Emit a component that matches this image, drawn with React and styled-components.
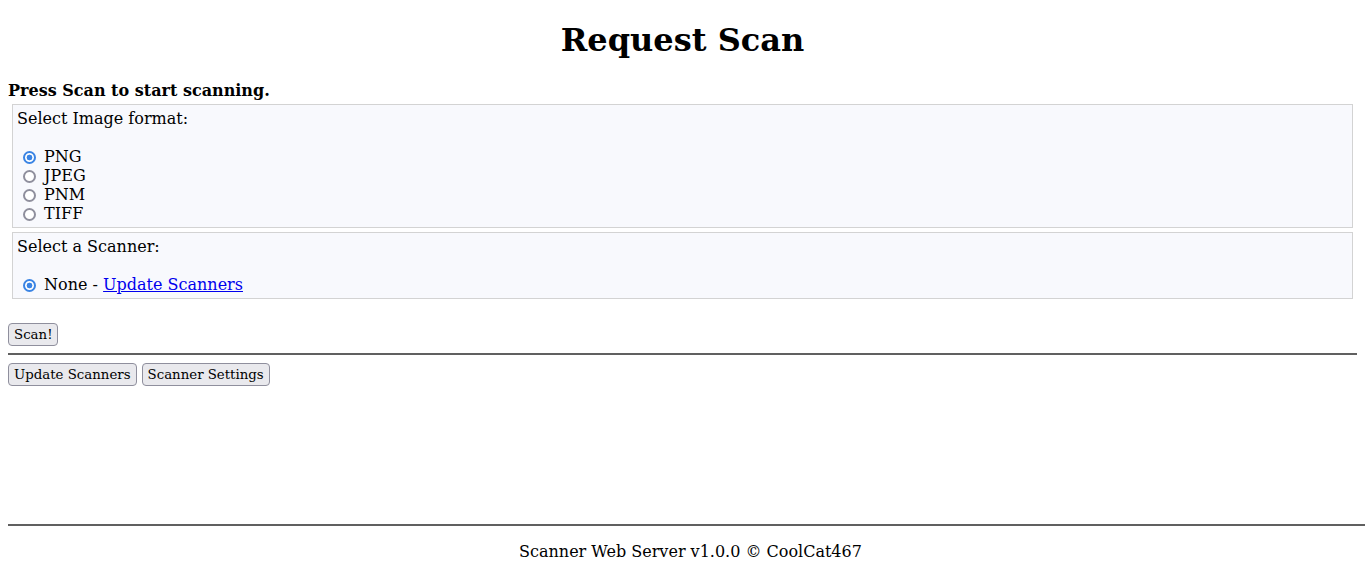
import React, { useState } from "react";
import styled, { createGlobalStyle } from "styled-components";

const GlobalStyle = createGlobalStyle`
	html, body {
		margin: 0;
		overflow: hidden;
	}

	body {
		font-family: "DejaVu Serif", serif;
		font-size: 16px;
		color: #000;
		background: #fff;
	}
`;

const formats = ["PNG", "JPEG", "PNM", "TIFF"];

function Option({ name, value, checked, onChange, children }) {
	return (
		<OptionRow>
			<Radio
				type="radio"
				name={name}
				value={value}
				checked={checked}
				onChange={onChange}
			/>{" "}
			{children}
		</OptionRow>
	);
}

function App() {
	const [format, setFormat] = useState("PNG");
	const [scanner, setScanner] = useState("none");

	return (
		<Page>
			<GlobalStyle />
			<Main>
				<Title>Request Scan</Title>
				<Intro>Press Scan to start scanning.</Intro>

				<Group>
					<GroupLabel>Select Image format:</GroupLabel>
					{formats.map((f) => (
						<Option
							key={f}
							name="img_format"
							value={f}
							checked={format === f}
							onChange={() => setFormat(f)}
						>
							{f}
						</Option>
					))}
				</Group>

				<Group>
					<GroupLabel>Select a Scanner:</GroupLabel>
					<Option
						name="scanner"
						value="none"
						checked={scanner === "none"}
						onChange={() => setScanner("none")}
					>
						None - <a href="#">Update Scanners</a>
					</Option>
				</Group>

				<ScanRow>
					<Button>Scan!</Button>
				</ScanRow>
				<Rule />
				<ButtonRow>
					<Button>Update Scanners</Button>
					<Button>Scanner Settings</Button>
				</ButtonRow>
			</Main>

			<Footer>
				<Rule />
				<FooterText>Scanner Web Server v1.0.0 © CoolCat467</FooterText>
			</Footer>
		</Page>
	);
}

export default App;

const Page = styled.div`
	display: flex;
	flex-direction: column;
	min-height: 100vh;
	padding: 0 8px;
	box-sizing: border-box;
`;

const Main = styled.div`
	display: flow-root;
`;

const Title = styled.h1`
	margin: 21.44px 0;
	font-size: 32px;
	font-weight: bold;
	text-align: center;
`;

const Intro = styled.div`
	font-weight: bold;
	margin-bottom: 4px;
`;

const Group = styled.div`
	margin: 4px;
	padding: 4px;
	border: 1px solid #d3d3d3;
	background: #f8f9fd;
`;

const GroupLabel = styled.div`
	margin-bottom: 19px;
`;

const OptionRow = styled.div`
	height: 19px;
	line-height: 19px;

	a {
		color: #0000ee;
	}
`;

const Radio = styled.input`
	appearance: none;
	box-sizing: border-box;
	width: 13px;
	height: 13px;
	margin: 3px 3px 0 6px;
	border: 2px solid #8f8f9d;
	border-radius: 50%;
	background: #fff;
	vertical-align: -2px;

	&:checked {
		border-color: #3a84e4;
		background: radial-gradient(circle, #3a84e4 0 2.6px, #fff 3.2px);
	}
`;

const ScanRow = styled.div`
	margin-top: 24px;
	display: flex;
`;

const ButtonRow = styled.div`
	display: flex;
	gap: 5px;
`;

const Button = styled.button`
	font-family: "DejaVu Serif", serif;
	font-size: 13.33px;
	color: #000;
	background: #e9e9ed;
	border: 1px solid #8f8f9d;
	border-radius: 4px;
	padding: 3px 5px 2px;
	line-height: 16px;
`;

const Rule = styled.hr`
	margin: 7px 0 8px;
	height: 0;
	border: 0;
	border-top: 2px solid #606060;
`;

const Footer = styled.footer`
	margin-top: auto;
	margin-right: -16px;
`;

const FooterText = styled.p`
	margin: 16px 0 15px;
	text-align: center;
`;
